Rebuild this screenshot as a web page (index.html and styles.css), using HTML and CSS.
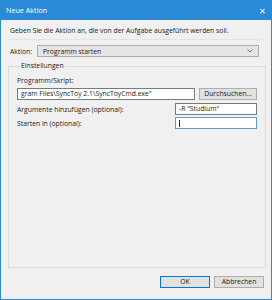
FILE: index.html
```html
<!DOCTYPE html>
<html>
<head>
<meta charset="utf-8">
<title>Neue Aktion</title>
<link rel="stylesheet" href="styles.css">
</head>
<body>
<div class="window">
  <div class="titlebar">
    <span class="title">Neue Aktion</span>
    <span class="close">&#x2715;</span>
  </div>
  <div class="content">
    <div class="intro">Geben Sie die Aktion an, die von der Aufgabe ausgeführt werden soll.</div>
    <div class="action-row">
      <span class="label">Aktion:</span>
      <div class="combo">
        <span>Programm starten</span>
        <svg class="arrow" width="6" height="4" viewBox="0 0 6 4"><path d="M0.5 0.5 L3 3 L5.5 0.5" fill="none" stroke="#555" stroke-width="0.8"/></svg>
      </div>
    </div>
    <fieldset class="group">
      <legend>Einstellungen</legend>
      <div class="field-label">Programm/Skript:</div>
      <div class="prog-row">
        <div class="input prog">gram Files\SyncToy 2.1\SyncToyCmd.exe"</div>
        <div class="button">Durchsuchen...</div>
      </div>
      <div class="opt-row">
        <span class="field-label">Argumente hinzufügen (optional):</span>
        <div class="input small">-R "Studium"</div>
      </div>
      <div class="opt-row">
        <span class="field-label">Starten in (optional):</span>
        <div class="input small focus"><span class="caret"></span></div>
      </div>
    </fieldset>
    <div class="buttons">
      <div class="button default">OK</div>
      <div class="button">Abbrechen</div>
    </div>
  </div>
</div>
</body>
</html>
```
FILE: styles.css
```css
* { margin: 0; padding: 0; box-sizing: border-box; }
body {
  width: 272px;
  height: 300px;
  font-family: "Open Sans", "Noto Sans", sans-serif;
  font-size: 6.8px;
  color: #1a1a1a;
  background: #fff;
}
.window {
  width: 272px;
  height: 300px;
  border: 1px solid #2b8ad6;
  border-top: 0;
  background: #f0f0f0;
  display: flex;
  flex-direction: column;
}
.titlebar {
  height: 20px;
  background: #2b8ad6;
  color: #fff;
  display: flex;
  align-items: center;
  justify-content: space-between;
  padding: 0 5px 0 5px;
  font-size: 7.2px;
}
.close { font-size: 8px; }
.content {
  flex: 1;
  display: flex;
  flex-direction: column;
  padding: 0 6px 0 7px;
}
.intro {
  height: 20px;
  line-height: 22px;
  padding-left: 2px;
  border-bottom: 1px solid #e3e3e3;
  margin-right: 2px;
}
.action-row {
  display: flex;
  align-items: center;
  margin-top: 5px;
  padding-left: 2px;
}
.action-row .label { width: 27px; }
.combo {
  width: 222px;
  height: 12px;
  background: #e5e5e5;
  border: 1px solid #adadad;
  display: flex;
  align-items: center;
  justify-content: space-between;
  padding: 0 5px 0 5px;
}
.group {
  border: 1px solid #dcdcdc;
  margin-top: 5px;
  height: 206px;
  width: 257px;
  padding: 0 8px 0 8px;
}
.group legend {
  padding: 0 1px;
  margin-left: 3px;
  line-height: 8px;
}
.field-label { white-space: nowrap; }
.group > .field-label { margin-top: 6px; }
.prog-row {
  display: flex;
  gap: 4px;
  margin-top: 3px;
}
.input {
  background: #fff;
  border: 1px solid #7a7a7a;
  height: 12px;
  line-height: 10px;
  padding: 0 3px;
  white-space: nowrap;
  overflow: hidden;
}
.input.prog { width: 178px; }
.input.small { width: 82px; }
.input.focus { border-color: #5a9ad6; }
.caret {
  display: inline-block;
  width: 1px;
  height: 7px;
  background: #333;
  vertical-align: middle;
}
.button {
  background: #e1e1e1;
  border: 1px solid #adadad;
  height: 12px;
  line-height: 10px;
  text-align: center;
  width: 58px;
}
.opt-row {
  display: flex;
  justify-content: space-between;
  align-items: center;
  margin-top: 3px;
}
.opt-row + .opt-row { margin-top: 2px; }
.buttons {
  display: flex;
  justify-content: flex-end;
  gap: 4px;
  margin-top: 8px;
  padding-right: 1px;
}
.buttons .button { width: 50px; height: 12px; }
.button.default { border-color: #0078d7; }
```
